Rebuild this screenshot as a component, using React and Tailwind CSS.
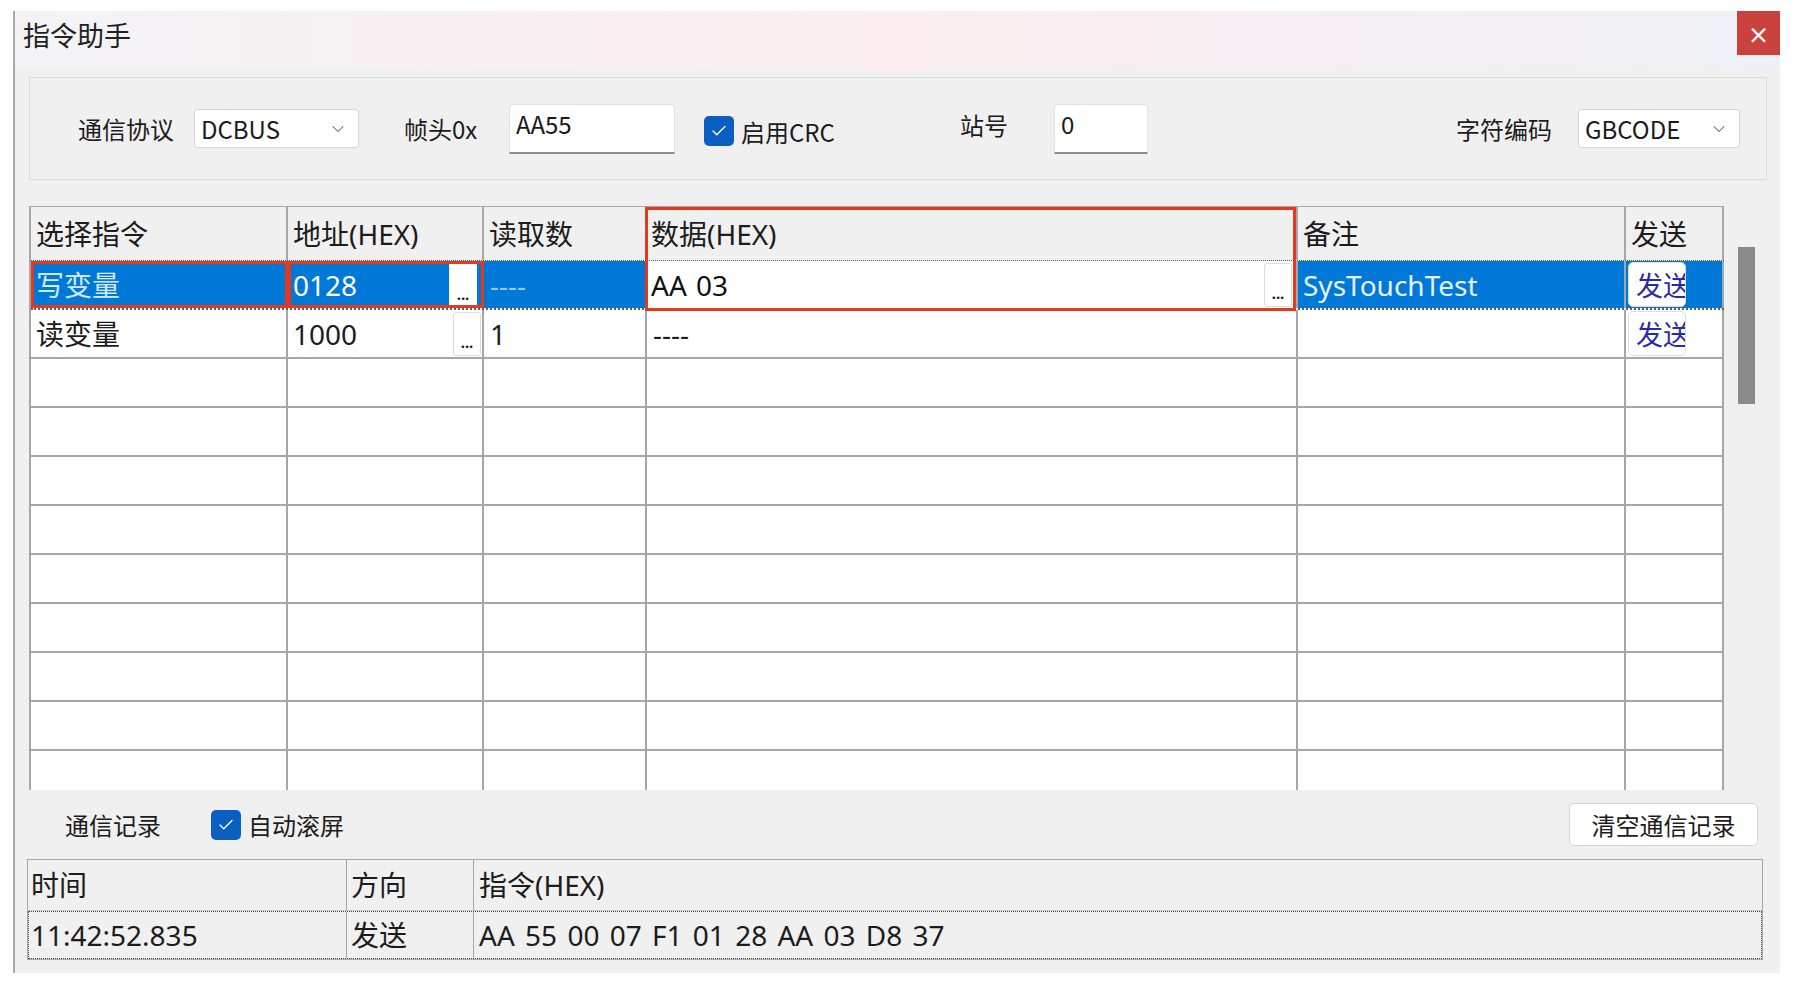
import React from "react";
import { ChevronDown, Check } from "lucide-react";

const cols = {
  c1: "w-[257px]",
  c2: "w-[196px]",
  c3: "w-[163px]",
  c4: "w-[651px]",
  c5: "w-[328px]",
  c6: "w-[98px]",
};

const BlueBox = ({ className = "" }) => (
  <div className={"flex h-[30px] w-[30px] shrink-0 items-center justify-center rounded-[5px] bg-[#0b5fc3] " + className}>
    <Check size={18} strokeWidth={1.75} color="#ffffff" />
  </div>
);

const Select = ({ value, className = "" }) => (
  <div className={"flex h-[39px] items-center justify-between rounded-[3px] border border-[#d6d6d6] bg-white pl-[6px] pr-[10px] " + className}>
    <span className="text-[24px] leading-none text-[#1a1a1a]">{value}</span>
    <ChevronDown size={20} strokeWidth={1.25} color="#666666" />
  </div>
);

const TextBox = ({ value, className = "" }) => (
  <div className={"h-[50px] rounded-t-[4px] border border-b-2 border-[#e3e3e3] border-b-[#8c8c8c] bg-white pl-[6px] pt-[4px] text-[24px] leading-[30px] text-[#1a1a1a] " + className}>
    {value}
  </div>
);

const Dots = ({ className = "" }) => (
  <div className={"ml-auto flex h-[44px] w-[28px] shrink-0 items-end justify-center rounded-[3px] border border-[#dcdcdc] bg-white pb-[5px] text-[15px] font-bold leading-none text-[#222] " + className}>
    ...
  </div>
);

const SendBtn = () => (
  <div className="h-[45px] w-[58px] overflow-hidden whitespace-nowrap rounded-[5px] border border-[#dedede] bg-white pl-[7px] text-[27px] leading-[45px] text-[#2a2aa8]">
    发送
  </div>
);

const cell = "flex h-full shrink-0 items-center overflow-hidden whitespace-nowrap border-r-2 border-[#a6a6a6]";
const wide = "font-['Noto_Sans','Noto_Sans_CJK_SC',sans-serif] text-[28px]";

export default function App() {
  return (
    <div className="min-h-screen bg-white font-['Noto_Sans_CJK_SC','Noto_Sans',sans-serif] text-[#1c1c1c]">
      <div className="ml-[13px] pt-[11px]">
        <div className="flex h-[962px] w-[1767px] flex-col border-l-2 border-[#a9a9a9] bg-[#f0f0f0]">
          {/* title bar */}
          <div className="flex h-[59px] shrink-0 items-start justify-between bg-gradient-to-r from-[#f3f3f5] via-[#fbedf0] to-[#eff1f6]">
            <span className="pl-[8px] pt-[8px] text-[27px] leading-[32px] text-[#222]">指令助手</span>
            <div className="flex h-[44px] w-[43px] items-center justify-center bg-[#c9423d] text-[22px] font-bold leading-none text-white">
              ×
            </div>
          </div>

          {/* settings group */}
          <div className="ml-[14px] mr-[13px] mt-[7px] flex h-[103px] shrink-0 items-center border border-[#dadada] bg-[#f0f0f0] pl-[48px] pr-[26px]">
            <span className="w-[97px] text-[24px] leading-none">通信协议</span>
            <Select value="DCBUS" className="ml-[19px] w-[165px]" />
            <span className="ml-[45px] w-[75px] text-[24px] leading-none">帧头0x</span>
            <TextBox value="AA55" className="ml-[30px] w-[166px]" />
            <BlueBox className="ml-[29px] mt-[4px]" />
            <span className="ml-[7px] mt-[6px] w-[96px] text-[24px] leading-none">启用CRC</span>
            <span className="ml-[123px] mb-[8px] w-[48px] text-[24px] leading-none">站号</span>
            <TextBox value="0" className="ml-[46px] w-[94px]" />
            <span className="ml-auto w-[99px] text-[24px] leading-none">字符编码</span>
            <Select value="GBCODE" className="ml-[23px] w-[162px]" />
          </div>

          {/* command table */}
          <div className="ml-[14px] mr-[13px] mt-[26px] flex h-[584px] shrink-0 overflow-hidden">
            <div className={`relative flex-1 overflow-hidden border-l-2 border-t border-[#a6a6a6] bg-white ${wide}`}>
              {/* header */}
              <div className="flex h-[54px] border-b border-dotted border-[#555] bg-[#f0f0f0]">
                <div className={`${cell} ${cols.c1} pl-[5px]`}>选择指令</div>
                <div className={`${cell} ${cols.c2} pl-[5px]`}>地址(HEX)</div>
                <div className={`${cell} ${cols.c3} pl-[5px]`}>读取数</div>
                <div className={`${cell} ${cols.c4} pl-[4px]`}>数据(HEX)</div>
                <div className={`${cell} ${cols.c5} pl-[5px]`}>备注</div>
                <div className={`${cell} ${cols.c6} pl-[5px]`}>发送</div>
              </div>

              {/* selected row */}
              <div className="flex h-[49px] border-b-2 border-dotted border-[#5e5e5e]">
                <div className={`${cell} ${cols.c1} bg-[#0078d7] pl-[5px] text-[#d3e9ff] outline-3 -outline-offset-3 outline-[#e4381f]`}>写变量</div>
                <div className={`${cell} ${cols.c2} bg-[#0078d7] pl-[5px] pr-[5px] text-white outline-3 -outline-offset-3 outline-[#e4381f]`}>
                  <span>0128</span>
                  <Dots className="border-0" />
                </div>
                <div className={`${cell} ${cols.c3} bg-[#0078d7] pl-[6px] text-[#9cc9f2]`}>----</div>
                <div className={`${cell} ${cols.c4} bg-white pl-[4px] pr-[4px] text-[#111]`}>
                  <span className="[word-spacing:2px]">AA 03</span>
                  <Dots />
                </div>
                <div className={`${cell} ${cols.c5} bg-[#0078d7] pl-[5px] text-[#e6f2ff]`}>SysTouchTest</div>
                <div className={`${cell} ${cols.c6} bg-[#0078d7] pl-[2px]`}>
                  <SendBtn />
                </div>
              </div>

              {/* second row */}
              <div className="flex h-[49px] border-b-2 border-[#a6a6a6]">
                <div className={`${cell} ${cols.c1} pl-[5px]`}>读变量</div>
                <div className={`${cell} ${cols.c2} pl-[5px] pr-[1px]`}>
                  <span>1000</span>
                  <Dots />
                </div>
                <div className={`${cell} ${cols.c3} pl-[6px]`}>1</div>
                <div className={`${cell} ${cols.c4} pl-[6px]`}>----</div>
                <div className={`${cell} ${cols.c5}`} />
                <div className={`${cell} ${cols.c6} pl-[2px]`}>
                  <SendBtn />
                </div>
              </div>

              {Array.from({ length: 9 }).map((_, i) => (
                <div key={i} className="flex h-[49px] border-b-2 border-[#a6a6a6]">
                  <div className={`${cell} ${cols.c1}`} />
                  <div className={`${cell} ${cols.c2}`} />
                  <div className={`${cell} ${cols.c3}`} />
                  <div className={`${cell} ${cols.c4}`} />
                  <div className={`${cell} ${cols.c5}`} />
                  <div className={`${cell} ${cols.c6}`} />
                </div>
              ))}

              {/* annotation box round the data column */}
              <div className="pointer-events-none absolute left-[614px] top-0 h-[104px] w-[651px] border-[3px] border-[#e4381f]" />
            </div>

            {/* scrollbar */}
            <div className="w-[43px] shrink-0 bg-[#f0f0f0] pl-[14px] pt-[41px]">
              <div className="h-[157px] w-[17px] bg-[#8a8a8a]" />
            </div>
          </div>

          {/* log toolbar */}
          <div className="flex h-[69px] shrink-0 items-center pl-[50px] pr-[22px]">
            <span className="text-[24px] leading-none">通信记录</span>
            <BlueBox className="ml-[50px]" />
            <span className="ml-[7px] text-[24px] leading-none">自动滚屏</span>
            <div className="ml-auto flex h-[43px] w-[189px] items-center justify-center rounded-[5px] border border-[#d4d4d4] bg-white text-[24px] leading-none">
              清空通信记录
            </div>
          </div>

          {/* log table */}
          <div className={`ml-[12px] mr-[17px] h-[101px] shrink-0 border border-[#a6a6a6] bg-[#f0f0f0] ${wide}`}>
            <div className="flex h-[51px] border-b border-[#c4c4c4]">
              <div className="flex h-full w-[319px] shrink-0 items-center border-r border-[#a6a6a6] pl-[3px]">时间</div>
              <div className="flex h-full w-[127px] shrink-0 items-center border-r border-[#a6a6a6] pl-[4px]">方向</div>
              <div className="flex h-full flex-1 items-center pl-[5px]">指令(HEX)</div>
            </div>
            <div className="flex h-[48px] border border-dotted border-[#4a4a4a]">
              <div className="flex h-full w-[318px] shrink-0 items-center border-r border-[#a6a6a6] pl-[2px]">11:42:52.835</div>
              <div className="flex h-full w-[127px] shrink-0 items-center border-r border-[#a6a6a6] pl-[4px]">发送</div>
              <div className="flex h-full flex-1 items-center pl-[5px] [word-spacing:3px]">AA 55 00 07 F1 01 28 AA 03 D8 37</div>
            </div>
          </div>
        </div>
      </div>
    </div>
  );
}
